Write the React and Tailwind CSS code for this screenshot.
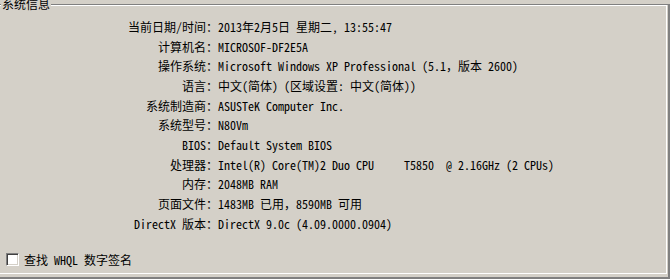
import React from "react";

const font = {
  fontFamily:
    '"Noto Sans Mono CJK SC", "Noto Sans CJK SC", "Liberation Mono", monospace',
};

const rows = [
  ["当前日期/时间：", "2013年2月5日 星期二, 13:55:47"],
  ["计算机名：", "MICROSOF-DF2E5A"],
  ["操作系统：", "Microsoft Windows XP Professional (5.1，版本 2600)"],
  ["语言：", "中文(简体) (区域设置: 中文(简体))"],
  ["系统制造商：", "ASUSTeK Computer Inc."],
  ["系统型号：", "N80Vm"],
  ["BIOS：", "Default System BIOS"],
  ["处理器：", "Intel(R) Core(TM)2 Duo CPU     T5850  @ 2.16GHz (2 CPUs)"],
  ["内存：", "2048MB RAM"],
  ["页面文件：", "1483MB 已用，8590MB 可用"],
  ["DirectX 版本：", "DirectX 9.0c (4.09.0000.0904)"],
];

export default function App() {
  return (
    <div
      className="w-[670px] h-[279px] bg-[#d4d0c8] text-black text-[12px] overflow-hidden relative"
      style={font}
    >
      {/* group frame */}
      <div className="mt-[4px] h-[275px] border-t border-t-[#808080] border-r-2 border-r-[#808080] border-b-2 border-b-[#808080]">
        <div className="h-[269px] mr-[1px] border-t border-t-white border-r border-r-white border-b border-b-white flex flex-col">
          <div className="pt-[11px] grid grid-cols-[218px_1fr]">
            {rows.map(([label, value]) => (
              <React.Fragment key={label}>
                <div className="text-right leading-[19.66px] whitespace-pre">
                  {label}
                </div>
                <div className="leading-[19.66px] whitespace-pre">{value}</div>
              </React.Fragment>
            ))}
          </div>

          <div className="mt-[20px] pl-[6px] flex items-center gap-[5px]">
            <span className="w-[13px] h-[13px] bg-white border-t border-l border-t-[#808080] border-l-[#808080] border-b border-r border-b-white border-r-white shadow-[inset_1px_1px_0_#404040,inset_-1px_-1px_0_#d4d0c8]" />
            <span className="leading-[13px] whitespace-pre">查找 WHQL 数字签名</span>
          </div>
        </div>
      </div>

      {/* group title sits over the frame line */}
      <div className="absolute top-[-2px] left-[1px] px-[1px] bg-[#d4d0c8] leading-[12px]">
        系统信息
      </div>
    </div>
  );
}
